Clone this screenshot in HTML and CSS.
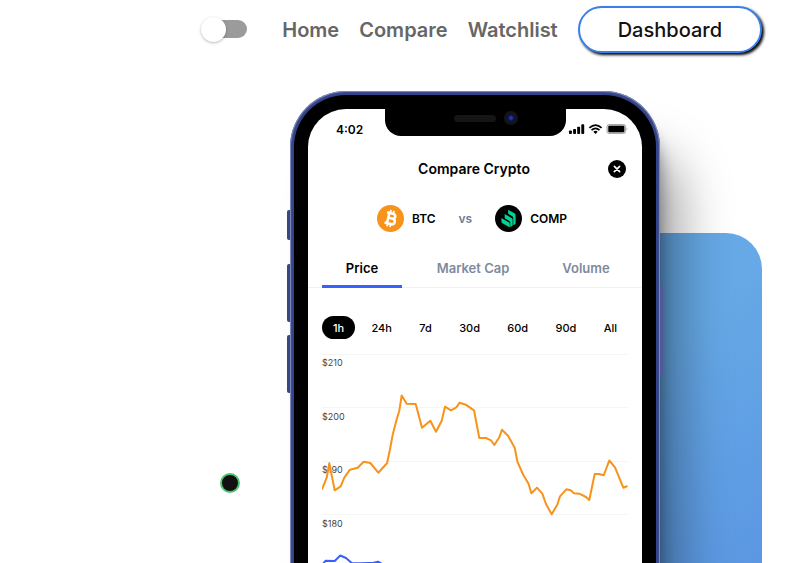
FILE: index.html
```html
<!DOCTYPE html>
<html lang="en">
<head>
<meta charset="utf-8">
<meta name="viewport" content="width=device-width, initial-scale=1">
<title>Crypto Tracker</title>
<link rel="stylesheet" href="styles.css">
</head>
<body>
<header class="header">
  <input class="switch" type="checkbox" aria-label="Dark mode">
  <nav class="nav">
    <a href="#">Home</a>
    <a href="#">Compare</a>
    <a href="#">Watchlist</a>
    <button class="dashboard" type="button">Dashboard</button>
  </nav>
</header>
<main class="hero">
  <div class="panel"></div>
  <section class="phone">
    <span class="key key-mute"></span>
    <span class="key key-up"></span>
    <span class="key key-down"></span>
    <span class="key key-power"></span>
    <div class="bezel">
      <div class="screen">
        <div class="status">
          <span class="time">4:02</span>
          <div class="notch"><span class="speaker"></span><span class="camera"></span></div>
          <svg class="signals" viewBox="0 0 60 12" width="60" height="12" aria-hidden="true">
            <g fill="#000">
              <rect x="1" y="7.500" width="2.900" height="3.500" rx=".8"/>
              <rect x="5.100" y="6" width="2.900" height="5" rx=".8"/>
              <rect x="9.200" y="3.800" width="2.900" height="7.200" rx=".8"/>
              <rect x="13.300" y="1.300" width="2.900" height="9.700" rx=".8"/>
              <path d="M25.300 8.800Q27.500 6.900 29.700 8.800L27.500 11Z"/>
            </g>
            <g fill="none" stroke="#000" stroke-width="1.800">
              <path d="M21.400 4.900Q27.500-.7 33.600 4.900"/>
              <path d="M23.500 7.200Q27.500 3.600 31.500 7.200"/>
            </g>
            <rect x="39" y="1.500" width="18.500" height="9" rx="2" fill="#ccc" stroke="#aaa"/>
            <rect x="40.300" y="2.700" width="16" height="6.600" rx="1" fill="#000"/>
            <path d="M58.500 4.300q1.800 1.700 0 3.400Z" fill="#aaa"/>
          </svg>
        </div>
        <div class="title-row">
          <h2>Compare Crypto</h2>
          <button class="close" type="button" aria-label="Close">
            <svg viewBox="0 0 18 18" width="18" height="18"><circle cx="9" cy="9" r="9"/><path d="M6.400 6.400l5.200 5.200M11.600 6.400l-5.200 5.200" stroke="#fff" stroke-width="1.700" stroke-linecap="round"/></svg>
          </button>
        </div>
        <div class="pair">
          <span class="coin">
            <svg viewBox="0 0 32 32" width="27" height="27" aria-hidden="true">
              <circle cx="16" cy="16" r="16" fill="#f7931a"/>
              <g transform="rotate(14 16 16)" fill="none" stroke="#fff">
                <path d="M10.300 9.700h7.200c4.500 0 4.500 5.900 0 5.900h-4.300M10.300 22.300h7.700c5.200 0 5.200-6.700 0-6.700M13.200 9.700v12.600" stroke-width="3"/>
                <path d="M14.200 6v3M17.900 6v3M14.200 22.600v3.400M17.900 22.600v3.400" stroke-width="2.100"/>
              </g>
            </svg>
            BTC
          </span>
          <span class="versus">vs</span>
          <span class="coin">
            <svg viewBox="0 0 32 32" width="27" height="27" aria-hidden="true">
              <circle cx="16" cy="16" r="16"/>
              <g fill="#00d395">
                <path d="M7.600 19.300v-3.900l9 5.200c.6.400.9.900.9 1.500v4.600l-8.600-5c-.9-.5-1.300-1.400-1.300-2.400Z"/>
                <path d="M11.500 14.500v-3.900l8.500 5c.6.400.9.900.9 1.500v7.500l-2.800 1.600v-5.400c0-.8-.4-1.500-1.100-1.900l-5.500-3.300Z"/>
                <path d="M15.600 9.600V5.600l7.800 4.600c.7.400 1 1 1 1.700v10.500l-2.800 1.600v-8.700c0-.8-.4-1.500-1.100-1.900l-4.900-2.900Z"/>
              </g>
            </svg>
            COMP
          </span>
        </div>
        <div class="tabs">
          <button class="active" type="button">Price</button>
          <button type="button">Market Cap</button>
          <button type="button">Volume</button>
        </div>
        <div class="ranges">
          <button class="active" type="button">1h</button>
          <button type="button">24h</button>
          <button type="button">7d</button>
          <button type="button">30d</button>
          <button type="button">60d</button>
          <button type="button">90d</button>
          <button type="button">All</button>
        </div>
        <svg class="chart" viewBox="322 350 306 240" role="img" aria-label="Price chart">
          <path class="grid" d="M322 354.500H628M322 407.500H628M322 461.500H628M322 514.500H628M322 568.500H628"/>
          <g class="labels">
            <text x="322" y="366">$210</text>
            <text x="322" y="420">$200</text>
            <text x="322" y="473">$190</text>
            <text x="322" y="527">$180</text>
          </g>
          <polyline class="btc" points="322,489.500 326.700,477.700 329.300,463.300 334.700,490.300 340.700,486.300 344.300,477.700 350,469.700 357.700,467.700 363.700,461.700 370.300,463 378.300,472.700 387,463.300 389.700,450.700 392.700,434.700 396,421.700 399.300,410.700 401.700,395.500 406.700,403.700 415.700,404 422,427.700 430.300,420.700 436,431.700 441.700,420.700 445,406.700 451,410.300 456.300,407.300 459.700,402.700 465.700,404.700 474,410.300 479.300,438 486,438 491,440.300 494.300,445 499.300,437.300 502,429.700 508,435.700 514.700,447.700 517.300,461.300 523.300,475 528.700,484 531.300,493.300 537,487.700 542.300,493.700 546,504 551.700,514.300 557.300,504.700 560,496.300 566.300,489.300 570.700,490.300 574,493.300 579.300,493.700 586,497 589.300,500 594.700,474 599,474 603.700,475.300 609.300,460.500 615,467.300 623.300,487.700 627.500,486"/>
          <polyline class="comp" points="322,565 325.700,560.700 334.700,561 340.300,555.500 346,558 351.700,563 361,563.200 373.700,562.700 378,561.700 383,564.500 390,570"/>
        </svg>
      </div>
    </div>
  </section>
</main>
<span class="cursor" aria-hidden="true"></span>
</body>
</html>
```
FILE: styles.css
```css
* { box-sizing: border-box; }

body {
  margin: 0;
  height: 100vh;
  overflow: hidden;
  display: flex;
  flex-direction: column;
  background: #fff;
  color: #000;
  font-family: Inter, "Liberation Sans", sans-serif;
}

button {
  margin: 0;
  padding: 0;
  border: 0;
  background: none;
  color: inherit;
  font: inherit;
  cursor: pointer;
}

.header {
  display: flex;
  justify-content: flex-end;
  align-items: center;
  gap: 35px;
  padding: 6px 26px 0;
}

.switch {
  appearance: none;
  position: relative;
  width: 46px;
  height: 25px;
  margin: 0;
  cursor: pointer;
}
.switch::before,
.switch::after {
  content: "";
  position: absolute;
}
.switch::before {
  inset: 3px 0 4px 11px;
  border-radius: 9px;
  background: #9b9b9b;
}
.switch::after {
  top: 0;
  left: 0;
  width: 25px;
  height: 25px;
  border-radius: 50%;
  background: #fff;
  box-shadow: 0 1px 3px rgba(0, 0, 0, .28);
}

.nav {
  display: flex;
  align-items: center;
  gap: 20px;
  font-size: 20px;
  font-weight: 600;
}
.nav a {
  color: #666;
  text-decoration: none;
}

.dashboard {
  height: 47px;
  padding: 0 38px;
  border: 2px solid #3a80e9;
  border-radius: 24px;
  background: #fff;
  color: #111;
  font-weight: 500;
  box-shadow: 2px 2px 3px #000;
}

.hero {
  flex: 1;
  display: grid;
  justify-items: end;
  align-items: start;
  padding: 38px 26px 0;
}
.panel,
.phone { grid-area: 1 / 1; }

.panel {
  width: 300px;
  height: 560px;
  margin-top: 142px;
  border-radius: 36px;
  background: linear-gradient(140deg, #66a9e6 35%, #5a95e2 75%);
}

.phone {
  position: relative;
  width: 370px;
  height: 750px;
  margin-right: 102px;
  padding: 4px;
  border-radius: 56px;
  background: #34448a;
  box-shadow:
    inset 0 0 1px 1px #8790bc,
    8px 20px 16px -8px rgba(0, 0, 0, .4),
    34px 50px 50px -12px rgba(0, 0, 0, .34);
}

.key {
  position: absolute;
  left: -3px;
  width: 3px;
  border-radius: 2px 0 0 2px;
  background: #394781;
}
.key-mute { top: 119px; height: 30px; }
.key-up { top: 173px; height: 58px; }
.key-down { top: 244px; height: 58px; }
.key-power {
  left: auto;
  right: -3px;
  top: 194px;
  height: 91px;
  border-radius: 0 2px 2px 0;
  background: #52579a;
}

.bezel {
  height: 100%;
  padding: 14px;
  border-radius: 52px;
  background: #000;
}
.screen {
  height: 100%;
  overflow: hidden;
  border-radius: 38px;
  background: #fff;
}

.status {
  display: grid;
  grid-template-columns: 1fr 181px 1fr;
  height: 40px;
}
.time {
  align-self: center;
  padding-left: 28px;
  font-size: 12px;
  font-weight: 600;
}
.notch {
  display: flex;
  justify-content: flex-end;
  gap: 8px;
  height: 27px;
  padding: 2px 48px 0 0;
  border-radius: 0 0 16px 16px;
  background: #000;
}
.speaker {
  width: 42px;
  height: 7px;
  margin-top: 4px;
  border-radius: 4px;
  background: #151515;
}
.camera {
  width: 14px;
  height: 14px;
  border-radius: 50%;
  background: radial-gradient(circle, #2638a8 0 1px, #0d1148 3px, #141418 5px);
}
.signals {
  align-self: center;
  margin-left: 2px;
}

.title-row {
  display: grid;
  grid-template-columns: 18px 1fr 18px;
  align-items: center;
  height: 39px;
  padding: 0 16px 0 14px;
}
.title-row h2 {
  grid-column: 2;
  margin: 0;
  font-size: 14px;
  font-weight: 600;
  text-align: center;
}
.close { height: 18px; }
.close svg { display: block; }

.pair {
  display: flex;
  justify-content: center;
  align-items: center;
  gap: 23px;
  height: 60px;
  padding-right: 6px;
  font-size: 12px;
  font-weight: 600;
}
.coin {
  display: flex;
  align-items: center;
  gap: 8px;
}
.versus { color: #707c98; }

.tabs {
  display: grid;
  grid-template-columns: 80px 1fr 84px;
  height: 40px;
  padding: 0 14px;
  box-shadow: inset 0 -1px #eff2f5;
  color: #808a9d;
  font-size: 13px;
  font-weight: 600;
}
.tabs .active {
  border-top: 3px solid transparent;
  border-bottom: 3px solid #3861fb;
  color: #000;
}

.ranges {
  display: flex;
  justify-content: space-between;
  margin: 28px 14px 11px;
  font-size: 11px;
  font-weight: 500;
}
.ranges button {
  height: 23px;
  padding: 0 11px;
  border-radius: 12px;
}
.ranges .active {
  background: #000;
  color: #fff;
}

.chart {
  display: block;
  width: 306px;
  margin: 0 14px;
}
.grid { stroke: #f4f5f6; }
.labels {
  fill: #444;
  font-size: 9px;
}
.btc,
.comp {
  fill: none;
  stroke-width: 2;
  stroke-linejoin: round;
}
.btc { stroke: #f7931a; }
.comp { stroke: #3861fb; }

.cursor {
  position: absolute;
  left: 220px;
  top: 473px;
  width: 20px;
  height: 20px;
  border: 2px solid #4fc272;
  border-radius: 50%;
  background: #111;
  pointer-events: none;
}
```
